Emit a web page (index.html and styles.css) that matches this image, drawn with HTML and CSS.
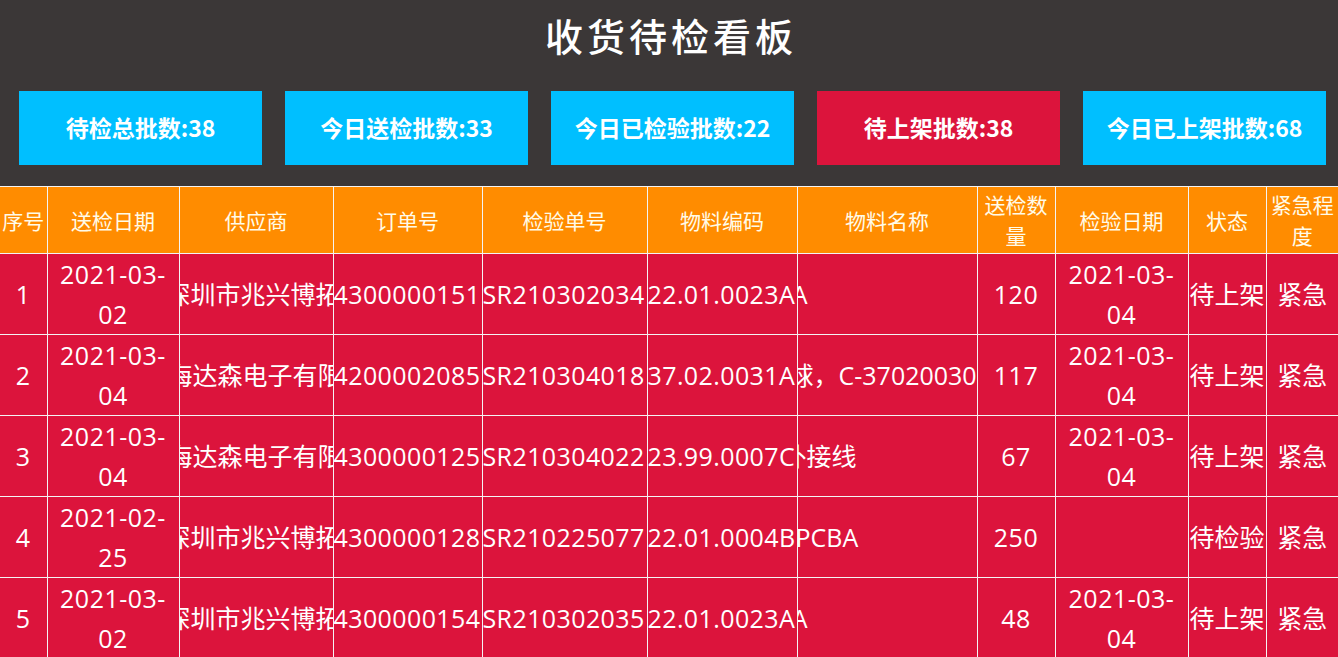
FILE: index.html
```html
<!DOCTYPE html>
<html lang="zh-CN">
<head>
<meta charset="utf-8">
<title>收货待检看板</title>
<link rel="stylesheet" href="styles.css">
</head>
<body>
<header class="top">
  <h1 class="title">收货待检看板</h1>
  <div class="cards">
    <div class="card">待检总批数:38</div>
    <div class="card">今日送检批数:33</div>
    <div class="card">今日已检验批数:22</div>
    <div class="card card-red">待上架批数:38</div>
    <div class="card">今日已上架批数:68</div>
  </div>
</header>
<table class="board">
  <colgroup>
    <col class="c-no"><col class="c-date"><col class="c-sup"><col class="c-ord"><col class="c-insp"><col class="c-code"><col class="c-name"><col class="c-qty"><col class="c-date2"><col class="c-st"><col class="c-urg">
  </colgroup>
  <thead>
    <tr>
      <th>序号</th><th>送检日期</th><th>供应商</th><th>订单号</th><th>检验单号</th><th>物料编码</th><th>物料名称</th><th>送检数量</th><th>检验日期</th><th>状态</th><th>紧急程度</th>
    </tr>
  </thead>
  <tbody>
    <tr>
      <td class="num">1</td><td class="date">2021-03-02</td>
      <td class="mq"><div class="mq-box"><span class="mq-text" style="margin-left:-14px">深圳市兆兴博拓科技有限公司</span></div></td>
      <td class="clip"><div class="clip-box">4300000151</div></td>
      <td class="clip"><div class="clip-box">SR210302034</div></td>
      <td class="clip"><div class="clip-box">22.01.0023A</div></td>
      <td class="mq"><div class="mq-box"><span class="mq-text tail" style="margin-left:10px">主控板PCBA</span></div></td>
      <td class="num">120</td><td class="date">2021-03-04</td><td>待上架</td><td>紧急</td>
    </tr>
    <tr>
      <td class="num">2</td><td class="date">2021-03-04</td>
      <td class="mq"><div class="mq-box"><span class="mq-text" style="margin-left:-37px">上海达森电子有限公司</span></div></td>
      <td class="clip"><div class="clip-box">4200002085</div></td>
      <td class="clip"><div class="clip-box">SR210304018</div></td>
      <td class="clip"><div class="clip-box">37.02.0031A</div></td>
      <td class="mq"><div class="mq-box"><span class="mq-text" style="margin-left:-34px">锡球，C-3702003001</span></div></td>
      <td class="num">117</td><td class="date">2021-03-04</td><td>待上架</td><td>紧急</td>
    </tr>
    <tr>
      <td class="num">3</td><td class="date">2021-03-04</td>
      <td class="mq"><div class="mq-box"><span class="mq-text" style="margin-left:-37px">上海达森电子有限公司</span></div></td>
      <td class="clip"><div class="clip-box">4300000125</div></td>
      <td class="clip"><div class="clip-box">SR210304022</div></td>
      <td class="clip"><div class="clip-box">23.99.0007C</div></td>
      <td class="mq"><div class="mq-box"><span class="mq-text" style="margin-left:-16px">外接线</span></div></td>
      <td class="num">67</td><td class="date">2021-03-04</td><td>待上架</td><td>紧急</td>
    </tr>
    <tr>
      <td class="num">4</td><td class="date">2021-02-25</td>
      <td class="mq"><div class="mq-box"><span class="mq-text" style="margin-left:-14px">深圳市兆兴博拓科技有限公司</span></div></td>
      <td class="clip"><div class="clip-box">4300000128</div></td>
      <td class="clip"><div class="clip-box">SR210225077</div></td>
      <td class="clip"><div class="clip-box">22.01.0004B</div></td>
      <td class="mq"><div class="mq-box"><span class="mq-text" style="margin-left:-2px">PCBA</span></div></td>
      <td class="num">250</td><td class="date"></td><td>待检验</td><td>紧急</td>
    </tr>
    <tr>
      <td class="num">5</td><td class="date">2021-03-02</td>
      <td class="mq"><div class="mq-box"><span class="mq-text" style="margin-left:-14px">深圳市兆兴博拓科技有限公司</span></div></td>
      <td class="clip"><div class="clip-box">4300000154</div></td>
      <td class="clip"><div class="clip-box">SR210302035</div></td>
      <td class="clip"><div class="clip-box">22.01.0023A</div></td>
      <td class="mq"><div class="mq-box"><span class="mq-text tail" style="margin-left:10px">主控板PCBA</span></div></td>
      <td class="num">48</td><td class="date">2021-03-04</td><td>待上架</td><td>紧急</td>
    </tr>
  </tbody>
</table>
</body>
</html>
```
FILE: styles.css
```css
html, body {
  margin: 0;
  padding: 0;
}
body {
  background: #3b3737;
  color: #fff;
  font-family: "Open Sans", "Noto Sans CJK SC", sans-serif;
  overflow: hidden;
  width: 1338px;
  height: 657px;
}
.top {
  display: flex;
  flex-direction: column;
  padding-bottom: 21px;
}
.title {
  margin: 0;
  height: 72px;
  line-height: 70px;
  text-align: center;
  font-family: "Noto Sans CJK SC", sans-serif;
  font-weight: 500;
  font-size: 38px;
  letter-spacing: 4px;
  text-indent: 4px;
  color: #fff;
}
.cards {
  display: flex;
  gap: 23px;
  padding-left: 19px;
  margin-top: 19px;
}
.card {
  width: 243px;
  height: 74px;
  padding-bottom: 3px;
  box-sizing: border-box;
  display: flex;
  align-items: center;
  justify-content: center;
  background: #00bfff;
  font-family: "Noto Sans CJK SC", sans-serif;
  font-weight: 700;
  font-size: 23px;
  color: #fff;
}
.card-red {
  background: #dc143c;
}
.board {
  width: 1338px;
  border-collapse: collapse;
  table-layout: fixed;
}
.c-no { width: 47px; }
.c-date { width: 132px; }
.c-sup { width: 154px; }
.c-ord { width: 149px; }
.c-insp { width: 165px; }
.c-code { width: 150px; }
.c-name { width: 180px; }
.c-qty { width: 78px; }
.c-date2 { width: 133px; }
.c-st { width: 78px; }
.c-urg { width: 72px; }
.board th, .board td {
  border: 1px solid #f4f4f4;
  padding: 0;
  text-align: center;
  vertical-align: middle;
  color: #fff;
}
.board th:first-child, .board td:first-child {
  border-left: none;
}
.board th:last-child, .board td:last-child {
  border-right: none;
}
.board th {
  background: #ff8c00;
  font-family: "Noto Sans CJK SC", sans-serif;
  font-weight: 400;
  font-size: 21px;
  line-height: 31px;
  height: 66px;
  color: #fffbe8;
}
.board td {
  background: #dc143c;
  font-size: 25px;
  line-height: 40px;
  height: 80px;
}
.board td.date {
  padding: 0 10px;
  letter-spacing: 0.5px;
}
.board td.num {
  letter-spacing: 0.5px;
}
.clip-box, .mq-box {
  overflow: hidden;
  white-space: nowrap;
  text-align: left;
}
.clip-box {
  letter-spacing: 0.4px;
}
.mq-text {
  display: inline-block;
}
.mq-text.tail {
  transform: translateX(-100%);
}
```
